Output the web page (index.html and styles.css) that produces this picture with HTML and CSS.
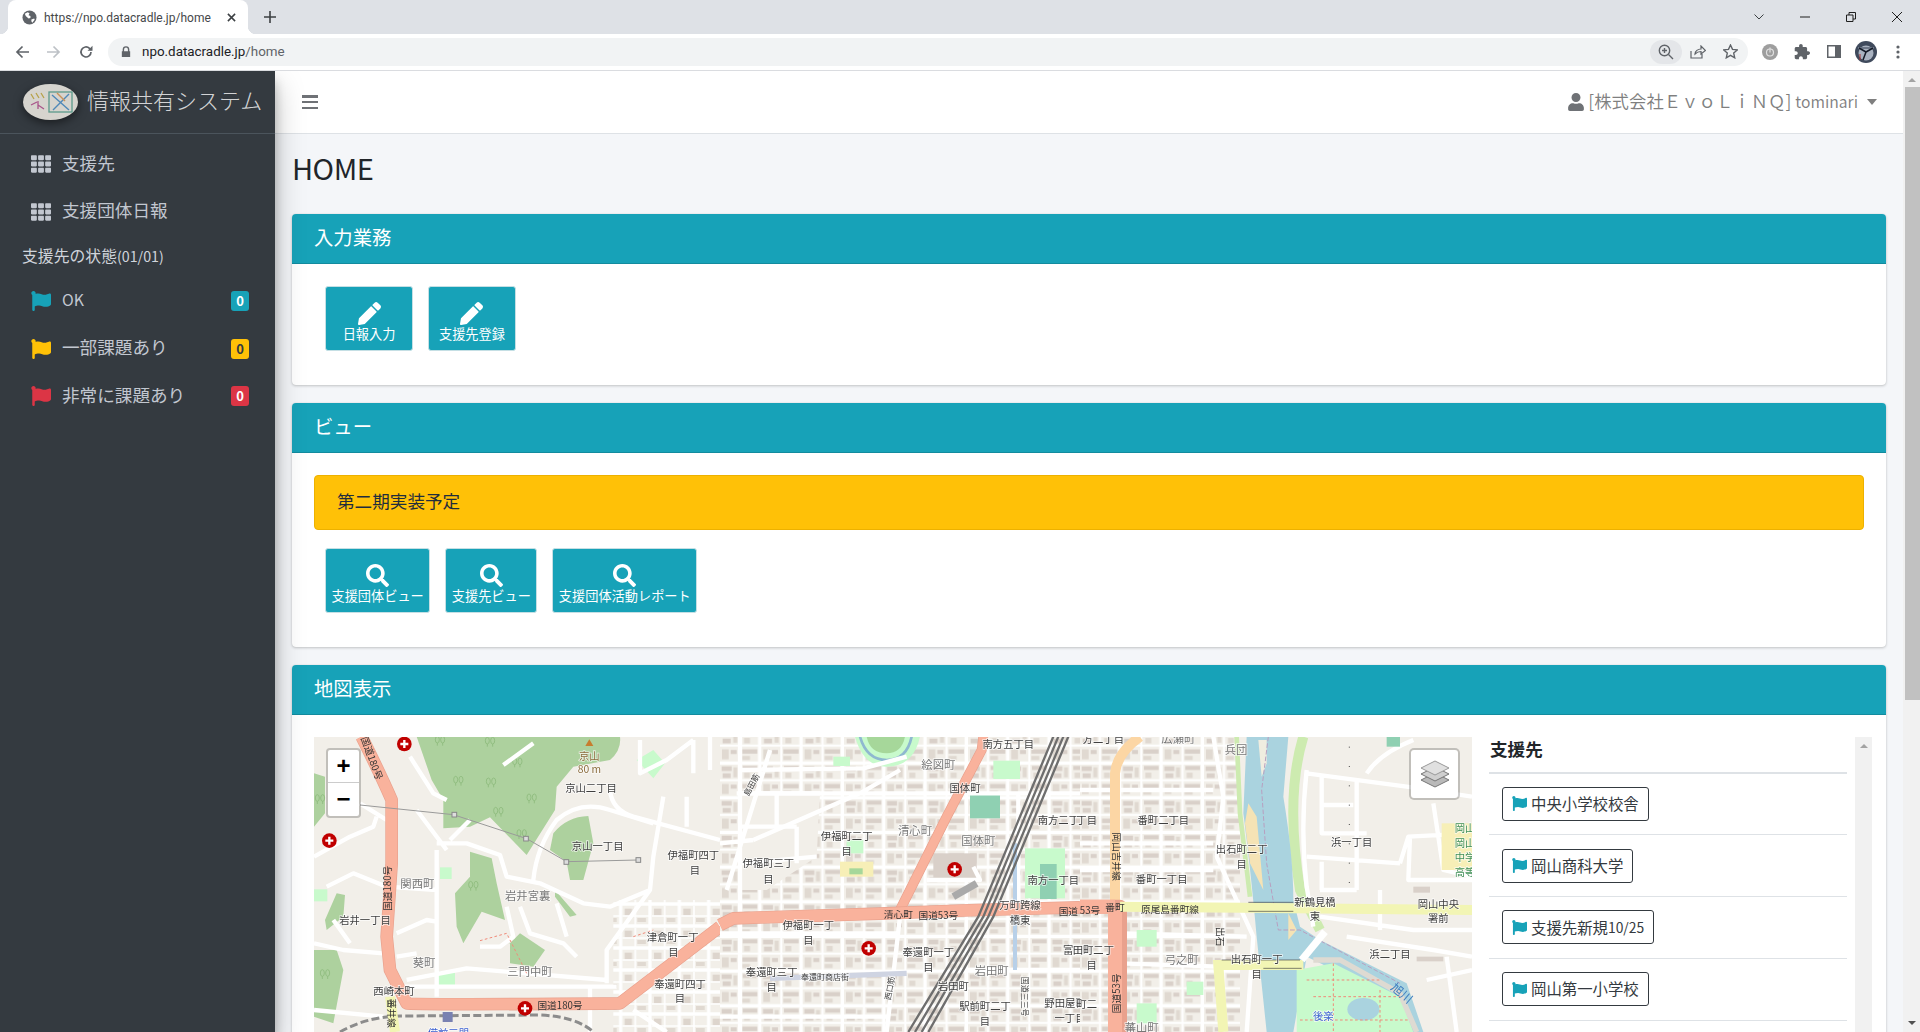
FILE: index.html
```html
<!DOCTYPE html>
<html lang="ja">
<head>
    <meta charset="UTF-8">
    <meta name="viewport" content="width=device-width, initial-scale=1.0">
    <title>HOME</title>
    <link rel="stylesheet" href="styles.css">
</head>
<body>

    <svg class="icon-defs" aria-hidden="true">
        <symbol id="i-flag" viewBox="0 0 512 512"><path d="M349.565 98.783C295.978 98.783 251.721 64 184.348 64c-24.955 0-47.309 4.384-68.045 12.013a55.947 55.947 0 0 0 3.586-23.562C118.117 24.015 94.806 1.206 66.338.048 34.345-1.254 8 24.296 8 56c0 19.026 9.497 35.825 24 45.945V488c0 13.255 10.745 24 24 24h16c13.255 0 24-10.745 24-24v-94.4c28.311-12.064 63.582-22.122 114.435-22.122 53.588 0 97.844 34.783 165.217 34.783 48.169 0 86.667-16.294 122.505-40.858C506.84 359.452 512 349.571 512 339.045v-243.1c0-23.393-24.269-38.87-45.485-29.016-34.338 15.948-76.454 31.854-116.95 31.854z"/></symbol>
        <symbol id="i-th" viewBox="0 0 512 512"><path d="M149.333 56v80c0 13.255-10.745 24-24 24H24c-13.255 0-24-10.745-24-24V56c0-13.255 10.745-24 24-24h101.333c13.255 0 24 10.745 24 24zm181.334 240v-80c0-13.255-10.745-24-24-24H205.333c-13.255 0-24 10.745-24 24v80c0 13.255 10.745 24 24 24h101.333c13.256 0 24.001-10.745 24.001-24zm32-240v80c0 13.255 10.745 24 24 24H488c13.255 0 24-10.745 24-24V56c0-13.255-10.745-24-24-24H386.667c-13.255 0-24 10.745-24 24zm-32 80V56c0-13.255-10.745-24-24-24H205.333c-13.255 0-24 10.745-24 24v80c0 13.255 10.745 24 24 24h101.333c13.256 0 24.001-10.745 24.001-24zm-205.334 56H24c-13.255 0-24 10.745-24 24v80c0 13.255 10.745 24 24 24h101.333c13.255 0 24-10.745 24-24v-80c0-13.255-10.745-24-24-24zM0 376v80c0 13.255 10.745 24 24 24h101.333c13.255 0 24-10.745 24-24v-80c0-13.255-10.745-24-24-24H24c-13.255 0-24 10.745-24 24zm386.667-56H488c13.255 0 24-10.745 24-24v-80c0-13.255-10.745-24-24-24H386.667c-13.255 0-24 10.745-24 24v80c0 13.255 10.745 24 24 24zm0 160H488c13.255 0 24-10.745 24-24v-80c0-13.255-10.745-24-24-24H386.667c-13.255 0-24 10.745-24 24v80c0 13.255 10.745 24 24 24zM181.333 376v80c0 13.255 10.745 24 24 24h101.333c13.255 0 24-10.745 24-24v-80c0-13.255-10.745-24-24-24H205.333c-13.255 0-24 10.745-24 24z"/></symbol>
        <symbol id="i-pencil" viewBox="0 0 512 512"><path d="M497.9 142.1l-46.1 46.1c-4.7 4.7-12.3 4.7-17 0l-111-111c-4.7-4.7-4.7-12.3 0-17l46.1-46.1c18.7-18.7 49.1-18.7 67.9 0l60.1 60.1c18.8 18.7 18.8 49.1 0 67.9zM284.2 99.8L21.6 362.4.4 483.9c-2.9 16.4 11.4 30.6 27.8 27.8l121.5-21.3 262.6-262.6c4.7-4.7 4.7-12.3 0-17l-111-111c-4.8-4.7-12.4-4.7-17.1 0z"/></symbol>
        <symbol id="i-search" viewBox="0 0 512 512"><path d="M505 442.7L405.3 343c-4.5-4.5-10.6-7-17-7H372c27.6-35.3 44-79.7 44-128C416 93.1 322.9 0 208 0S0 93.1 0 208s93.1 208 208 208c48.3 0 92.7-16.4 128-44v16.3c0 6.4 2.5 12.5 7 17l99.7 99.7c9.4 9.4 24.6 9.4 33.9 0l28.3-28.3c9.4-9.4 9.4-24.6.1-34zM208 336c-70.7 0-128-57.2-128-128 0-70.7 57.2-128 128-128 70.7 0 128 57.2 128 128 0 70.7-57.2 128-128 128z"/></symbol>
        <symbol id="i-user" viewBox="0 0 448 512"><path d="M224 256c70.7 0 128-57.3 128-128S294.7 0 224 0 96 57.3 96 128s57.3 128 128 128zm89.6 32h-16.7c-22.2 10.2-46.9 16-72.9 16s-50.6-5.8-72.9-16h-16.7C60.2 288 0 348.2 0 422.4V464c0 26.5 21.5 48 48 48h352c26.5 0 48-21.5 48-48v-41.6c0-74.2-60.2-134.4-134.4-134.4z"/></symbol>
    </svg>

    <!-- browser window -->
    <div class="tab-strip">
        <div class="tab">
            <svg class="tab-favicon" viewBox="0 0 16 16"><circle cx="8" cy="8" r="7.5" fill="#5f6368"/><path d="M3 4l3-1.5 2 1-1 2 2 1v2l-2 .5-3-2.5zM10 10l3-1 .5 1.5-2.5 3-1-1.5z" fill="#fff"/></svg>
            <span class="tab-title">https://npo.datacradle.jp/home</span>
            <svg class="tab-close" viewBox="0 0 10 10"><path d="M1 1l8 8M9 1l-8 8" stroke="#3c4043" stroke-width="1.7"/></svg>
        </div>
        <svg class="tab-new" viewBox="0 0 12 12"><path d="M6 0v12M0 6h12" stroke="#3c4043" stroke-width="1.6"/></svg>
        <div class="window-controls">
            <span class="window-btn"><svg width="10" height="6" viewBox="0 0 10 6"><path d="M.5.5L5 5 9.500.5" fill="none" stroke="#3c4043"/></svg></span>
            <span class="window-btn"><svg width="10" height="2" viewBox="0 0 10 2"><path d="M0 1h10" stroke="#1f1f1f"/></svg></span>
            <span class="window-btn"><svg width="10" height="10" viewBox="0 0 10 10"><path d="M.5 3h6.500v6.500H.5zM3 3V.5h6.500V7H7" fill="none" stroke="#1f1f1f"/></svg></span>
            <span class="window-btn"><svg width="10" height="10" viewBox="0 0 10 10"><path d="M0 0l10 10M10 0L0 10" stroke="#1f1f1f"/></svg></span>
        </div>
    </div>
    <div class="toolbar">
        <span class="tool-btn"><svg width="14" height="14" viewBox="0 0 14 14"><path d="M14 7H2M7.500 1.500L2 7l5.500 5.500" fill="none" stroke="#5f6368" stroke-width="1.700"/></svg></span>
        <span class="tool-btn"><svg width="14" height="14" viewBox="0 0 14 14"><path d="M0 7h12M6.500 1.500L12 7l-5.500 5.500" fill="none" stroke="#bdc1c6" stroke-width="1.700"/></svg></span>
        <span class="tool-btn"><svg width="14" height="14" viewBox="0 0 14 14"><path d="M12 7a5 5 0 1 1-1.500-3.600L12.500 5" fill="none" stroke="#5f6368" stroke-width="1.700"/><path d="M13.500.8v5h-5z" fill="#5f6368"/></svg></span>
        <div class="omnibox">
            <svg class="omni-lock" viewBox="0 0 12 14"><path d="M2 6V4a4 4 0 0 1 8 0v2h1v7H1V6zm1.700 0h4.600V4a2.300 2.300 0 0 0-4.600 0z" fill="#5f6368"/></svg>
            <span class="omni-url">npo.datacradle.jp<span class="omni-path">/home</span></span>
            <span class="omni-pill"><svg width="16" height="16" viewBox="0 0 16 16"><circle cx="6.500" cy="6.500" r="5.200" fill="none" stroke="#5f6368" stroke-width="1.400"/><path d="M10.500 10.500L15 15M4 6.500h5M6.500 4v5" stroke="#5f6368" stroke-width="1.400"/></svg></span>
            <span class="omni-btn"><svg width="16" height="14" viewBox="0 0 16 14"><path d="M1 6v7h11V9M5 9c0-3 3-5 6-5V1l4.500 4.500L11 9V6.500C8.500 6.500 6.500 7.500 5 9z" fill="none" stroke="#5f6368" stroke-width="1.200"/></svg></span>
            <span class="omni-btn"><svg width="15" height="15" viewBox="0 0 15 15"><path d="M7.500 1l2 4.400 4.800.5-3.600 3.200 1 4.700-4.200-2.400-4.200 2.400 1-4.700L.7 5.900l4.800-.5z" fill="none" stroke="#5f6368" stroke-width="1.400"/></svg></span>
        </div>
        <span class="tool-btn"><svg width="16" height="16" viewBox="0 0 16 16"><circle cx="8" cy="8" r="8" fill="#9e9e9e"/><circle cx="8" cy="8.500" r="3.500" fill="none" stroke="#e0e0e0" stroke-width="1.200"/><path d="M8 3.500v5" stroke="#e0e0e0" stroke-width="1.200"/></svg></span>
        <span class="tool-btn"><svg width="16" height="16" viewBox="1 1 22 22"><path fill="#5f6368" d="M20.500 11H19V7c0-1.100-.9-2-2-2h-4V3.500C13 2.120 11.880 1 10.500 1S8 2.120 8 3.500V5H4c-1.100 0-1.990.9-1.990 2v3.800H3.500c1.490 0 2.700 1.210 2.700 2.700s-1.210 2.700-2.700 2.700H2V20c0 1.100.9 2 2 2h3.800v-1.500c0-1.490 1.210-2.700 2.700-2.700 1.490 0 2.700 1.210 2.700 2.700V22H17c1.100 0 2-.9 2-2v-4h1.500c1.380 0 2.500-1.120 2.500-2.500S21.880 11 20.500 11z"/></svg></span>
        <span class="tool-btn"><svg width="14" height="13" viewBox="0 0 14 13"><rect width="14" height="13" fill="#5f6368"/><rect x="1.500" y="1.500" width="6.500" height="10" fill="#fff"/></svg></span>
        <span class="tool-btn"><svg width="22" height="22" viewBox="0 0 22 22"><circle cx="11" cy="11" r="11" fill="#3f4a5c"/><circle cx="11" cy="12" r="7.500" fill="#a9b2c0"/><path d="M3 6h16v2H3z" fill="#6d7788"/><path d="M11 11L4 7M11 11l7-4M11 11L8 19" stroke="#141a26" stroke-width="1.500" fill="none"/><path d="M5 13v6" stroke="#a33" stroke-width="1"/></svg></span>
        <span class="tool-btn"><svg width="4" height="14" viewBox="0 0 4 14"><circle cx="2" cy="2" r="1.600" fill="#5f6368"/><circle cx="2" cy="7" r="1.600" fill="#5f6368"/><circle cx="2" cy="12" r="1.600" fill="#5f6368"/></svg></span>
    </div>

    <div class="app">
        <!-- sidebar -->
        <aside class="sidebar">
            <div class="brand">
                <svg class="brand-logo" viewBox="0 0 55 36">
                    <ellipse cx="27.500" cy="18" rx="27.500" ry="18" fill="#d6d4ce"/>
                    <rect x="26" y="8" width="23" height="20" fill="none" stroke="#5b9a8b" stroke-width="1.300"/>
                    <path d="M29 11l17 15M46 10L30 26" stroke="#4f88b8" stroke-width="1.400"/>
                    <path d="M34 9l8 8" stroke="#c9925a" stroke-width="1.400"/>
                    <path d="M8 10l3 5M13 9l3 5M18 9l3 5" stroke="#b7a24a" stroke-width="1.300"/>
                    <path d="M8 21l6-3M15 17v8M15 21l6 4" stroke="#a9558a" stroke-width="1.300"/>
                </svg>
                <span class="brand-text">情報共有システム</span>
            </div>
            <nav class="side-nav">
                <a class="nav-item"><svg class="nav-icon icon-grid"><use href="#i-th"/></svg>支援先</a>
                <a class="nav-item"><svg class="nav-icon icon-grid"><use href="#i-th"/></svg>支援団体日報</a>
                <div class="nav-header">支援先の状態<span class="latin">(01/01)</span></div>
                <a class="nav-item"><svg class="nav-icon flag-info"><use href="#i-flag"/></svg><span class="latin">OK</span><span class="badge badge-info">0</span></a>
                <a class="nav-item"><svg class="nav-icon flag-warning"><use href="#i-flag"/></svg>一部課題あり<span class="badge badge-warning">0</span></a>
                <a class="nav-item"><svg class="nav-icon flag-danger"><use href="#i-flag"/></svg>非常に課題あり<span class="badge badge-danger">0</span></a>
            </nav>
        </aside>

        <div class="main">
            <header class="topbar">
                <span class="menu-toggle"><i></i><i></i><i></i></span>
                <span class="user-menu">
                    <svg class="user-icon"><use href="#i-user"/></svg>
                    <span class="user-name">[株式会社ＥｖｏＬｉＮＱ] <span class="latin">tominari</span></span>
                    <i class="caret"></i>
                </span>
            </header>

            <div class="content">
                <h1 class="page-title">HOME</h1>

                <section class="card">
                    <h3 class="card-header">入力業務</h3>
                    <div class="card-body">
                        <a class="app-btn"><svg class="app-icon"><use href="#i-pencil"/></svg>日報入力</a>
                        <a class="app-btn"><svg class="app-icon"><use href="#i-pencil"/></svg>支援先登録</a>
                    </div>
                </section>

                <section class="card">
                    <h3 class="card-header">ビュー</h3>
                    <div class="card-body">
                        <div class="alert">第二期実装予定</div>
                        <a class="app-btn"><svg class="app-icon"><use href="#i-search"/></svg>支援団体ビュー</a>
                        <a class="app-btn"><svg class="app-icon"><use href="#i-search"/></svg>支援先ビュー</a>
                        <a class="app-btn"><svg class="app-icon"><use href="#i-search"/></svg>支援団体活動レポート</a>
                    </div>
                </section>

                <section class="card">
                    <h3 class="card-header">地図表示</h3>
                    <div class="card-body">
                        <div class="map-row">
                            <div class="map">
                                <svg class="map-tiles" viewBox="314 737 1158 320" preserveAspectRatio="xMinYMin slice">
                                    <defs>
                                        <pattern id="blocks" width="124" height="104" patternUnits="userSpaceOnUse">
                                            <rect width="124" height="104" fill="#f2efe9"/>
                                            <rect x="5" y="5" width="30" height="14" fill="#d9d0c9"/>
                                            <rect x="40" y="8" width="12" height="30" fill="#e0d9d1"/>
                                            <rect x="8" y="26" width="24" height="14" fill="#d9d0c9"/>
                                            <rect x="68" y="4" width="44" height="12" fill="#d9d0c9"/>
                                            <rect x="72" y="24" width="18" height="16" fill="#e0d9d1"/>
                                            <rect x="6" y="58" width="20" height="30" fill="#e0d9d1"/>
                                            <rect x="32" y="60" width="18" height="12" fill="#d9d0c9"/>
                                            <rect x="66" y="58" width="46" height="13" fill="#d9d0c9"/>
                                            <rect x="66" y="78" width="24" height="12" fill="#e0d9d1"/>
                                            <path d="M0 47h124M60 0v104" stroke="#fff" stroke-width="6"/>
                                            <path d="M0 99h124M119 0v104" stroke="#fff" stroke-width="10"/>
                                        </pattern>
                                        <pattern id="blocks-wide" width="88" height="66" patternUnits="userSpaceOnUse">
                                            <rect width="88" height="66" fill="#f2efe9"/>
                                            <rect x="6" y="8" width="22" height="20" fill="#ddd5cd"/>
                                            <rect x="44" y="36" width="26" height="12" fill="#e0d9d1"/>
                                            <path d="M0 60h88M82 0v66" stroke="#fff" stroke-width="10"/>
                                            <path d="M38 0v60M0 30h82" stroke="#fff" stroke-width="5"/>
                                        </pattern>
                                        <g id="hospital">
                                            <circle r="22" fill="#c00000"/>
                                            <path d="M0-12V12M-12 0H12" stroke="#fff" stroke-width="7"/>
                                        </g>
                                        <g id="trees" fill="none" stroke="#8dbb7c" stroke-width="2.500">
                                            <ellipse cx="-8" cy="-6" rx="6" ry="10"/>
                                            <ellipse cx="8" cy="-6" rx="6" ry="10"/>
                                            <path d="M-8 4v8M8 4v8"/>
                                        </g>
                                    </defs>
                                    <rect x="314" y="737" width="1158" height="320" fill="#f2efe9"/>

                                    <!-- west part: hills and route 180 -->
                                    <g transform="translate(300 730) scale(.33333)">
                                        <rect x="940" y="510" width="330" height="420" fill="url(#blocks-wide)"/>
                                        <g class="park">
                                            <path d="M350 20H960Q965 60 930 90L820 110 770 170 765 240 680 375 570 262 510 290 430 295V210L395 150Z"/>
                                            <path d="M510 365L575 385 590 460 615 570 545 545 490 640 470 590 465 490 510 440Z"/>
                                            <path d="M630 640L660 610 735 660 700 710 630 700Z"/>
                                            <path d="M760 310Q800 260 865 258L880 340 850 450H810L800 395 750 360Z"/>
                                            <path d="M42 130L75 140V250L42 290ZM110 490L135 495 130 560 80 600 75 570ZM42 660H110L130 720 100 880 42 860ZM765 480L830 555 810 560 765 500Z"/>
                                        </g>
                                        <use href="#trees" x="475" y="155"/>
                                        <use href="#trees" x="573" y="160"/>
                                        <use href="#trees" x="695" y="208"/>
                                        <use href="#trees" x="652" y="100"/>
                                        <use href="#trees" x="595" y="248"/>
                                        <use href="#trees" x="420" y="35"/>
                                        <use href="#trees" x="570" y="38"/>
                                        <use href="#trees" x="665" y="315"/>
                                        <use href="#trees" x="520" y="470"/>
                                        <use href="#trees" x="60" y="210"/>
                                        <use href="#trees" x="75" y="735"/>
                                        <g class="park-light">
                                            <rect x="420" y="412" width="35" height="35"/>
                                            <path d="M1010 90L1060 60 1095 100 1060 145Z"/>
                                            <rect x="415" y="725" width="50" height="40"/>
                                            <rect x="42" y="478" width="40" height="36"/>
                                        </g>
                                        <path d="M930 180Q935 240 1000 260L1260 330M700 450Q710 350 770 270 840 210 930 240L1060 280M1090 200L1060 380 1050 480 920 660V760M410 340H500L600 375 620 440 720 460 850 520 930 530 1050 480M410 360V800M350 240L440 360M330 80L400 190 440 210M610 105L700 40M290 610L380 570 410 575M290 680L350 670M320 750L500 715 920 750M42 380L150 320 220 290 230 260M80 470L160 430 260 470 410 480M42 640L130 660 250 670M620 530L640 620 600 650 540 650M660 530L690 610 790 640 830 680M770 520L800 620M290 770H950M180 220L260 270M450 330L510 270M100 570L150 640M1020 30V130L1100 90 1180 30M1180 30V130M42 840L250 860M1160 200V290M1230 20V120M870 770V906M1000 840L1100 906" class="road"/>
                                        <path d="M185 20Q240 130 275 210V400L260 620 270 720 320 820Q340 825 960 820L1260 590" class="trunk-casing"/>
                                        <path d="M185 20Q240 130 275 210V400L260 620 270 720 320 820Q340 825 960 820L1260 590" class="trunk"/>
                                        <path d="M180 225L460 254 680 326 800 395 1015 390" class="power-line"/>
                                        <g class="pylon"><rect x="456" y="247" width="14" height="14"/><rect x="671" y="319" width="14" height="14"/><rect x="792" y="389" width="14" height="14"/><rect x="1008" y="383" width="14" height="14"/></g>
                                        <path d="M120 906Q200 860 300 858L720 855Q830 860 880 906" class="rail"/>
                                        <path d="M270 800L285 906" class="road-yellow"/>
                                        <rect x="428" y="846" width="30" height="30" fill="#7981b1"/>
                                        <path d="M868 28L880 48H856Z" fill="#c77d2e"/>
                                        <path d="M1000 620L1060 600M540 632L620 610 680 730" class="path-red"/>

                                        <text class="map-label label-peak" x="868" y="90">京山</text>
                                        <text class="map-label label-peak" x="868" y="130">80 m</text>
                                        <text class="map-label" x="873" y="186">京山二丁目</text>
                                        <text class="map-label" x="893" y="361">京山一丁目</text>
                                        <text class="map-label" x="1180" y="386">伊福町四丁</text>
                                        <text class="map-label" x="1185" y="431">目</text>
                                        <text class="map-label label-area" x="352" y="474">関西町</text>
                                        <text class="map-label label-area" x="683" y="511">岩井宮裏</text>
                                        <text class="map-label" x="195" y="583">岩井一丁目</text>
                                        <text class="map-label label-area" x="372" y="710">葵町</text>
                                        <text class="map-label label-area" x="690" y="738">三門中町</text>
                                        <text class="map-label" x="282" y="796">西崎本町</text>
                                        <text class="map-label label-road" x="780" y="836">国道180号</text>
                                        <text class="map-label" x="1118" y="633">津倉町一丁</text>
                                        <text class="map-label" x="1120" y="677">目</text>
                                        <text class="map-label" x="1140" y="773">奉還町四丁</text>
                                        <text class="map-label" x="1140" y="817">目</text>
                                        <text class="map-label label-road" transform="rotate(-90 262 475)" x="262" y="485">国道180号</text>
                                        <text class="map-label label-road" transform="rotate(70 215 85)" x="215" y="95">国道180号</text>
                                        <text class="map-label label-road" transform="rotate(90 275 850)" x="275" y="860">蕃井線</text>
                                        <text class="map-label label-blue" x="445" y="920">備前三門</text>
                                        <use href="#hospital" x="313" y="42"/>
                                        <use href="#hospital" x="88" y="332"/>
                                        <use href="#hospital" x="675" y="835"/>
                                    </g>

                                    <!-- centre part: station district -->
                                    <g transform="translate(720 730) scale(.33333)">
                                        <rect x="0" y="20" width="1080" height="900" fill="url(#blocks)"/>
                                        <path d="M60 190H300L290 380 140 480 60 480Z" fill="#f2efe9"/>
                                        <path d="M60 190H300M60 290H230M60 400L290 380M170 190V300M230 290V400" class="road"/>
                                        <path d="M405 20Q430 110 500 110 580 110 600 20Z" fill="#c8facc"/>
                                        <path d="M420 20Q440 90 500 90 560 90 575 20" fill="none" stroke="#8fb8d0" stroke-width="8"/>
                                        <path d="M440 20Q450 70 500 70 545 70 555 20Z" fill="#a6d79a"/>
                                        <g class="park-light">
                                            <rect x="820" y="92" width="80" height="55"/>
                                            <rect x="340" y="80" width="50" height="28"/>
                                            <rect x="380" y="330" width="50" height="40"/>
                                            <rect x="915" y="355" width="120" height="150"/>
                                        </g>
                                        <rect x="750" y="190" width="90" height="75" fill="#8fd0b2"/>
                                        <rect x="960" y="402" width="50" height="105" fill="#8fd0b2"/>
                                        <rect x="640" y="370" width="130" height="80" fill="#d9d0c9"/>
                                        <rect x="360" y="395" width="100" height="45" fill="#f7efb7"/>
                                        <rect x="388" y="415" width="40" height="18" fill="#a6d79a"/>
                                        <path d="M60 20V906M20 480L150 60M50 190H1080M60 120L430 115 560 80M0 340L100 330M100 330L420 190 540 120M0 610H540M0 860H500M500 906L540 560M620 450H780L760 410M720 720H1080M895 190V520" class="road"/>
                                        <path d="M885 340V720" stroke="#b8d0e8" stroke-width="12"/>
                                        <path d="M150 745L560 730" stroke="#cfd4e2" stroke-width="16"/>
                                        <path d="M540 540L680 260 785 60 790 20" class="trunk-casing trunk-thin"/>
                                        <path d="M540 540L680 260 785 60 790 20" class="trunk trunk-thin"/>
                                        <path d="M0 585L40 565 500 550 770 540 1080 532" class="trunk-casing"/>
                                        <path d="M0 585L40 565 500 550 770 540 1080 532" class="trunk"/>
                                        <path d="M565 906L775 560 1000 20M585 906L790 560 1015 20M605 906L805 560 1030 20M625 906L820 560 1045 20" class="rail-bundle"/>
                                        <path d="M700 500L770 460" stroke="#aaa" stroke-width="22"/>

                                        <text class="map-label" x="865" y="53">南方五丁目</text>
                                        <text class="map-label label-area" x="655" y="117">絵図町</text>
                                        <text class="map-label" x="735" y="186">国体町</text>
                                        <text class="map-label" x="1015" y="281">南方二丁</text>
                                        <text class="map-label label-area" x="585" y="315">清心町</text>
                                        <text class="map-label label-area" x="775" y="345">国体町</text>
                                        <text class="map-label" x="380" y="331">伊福町二丁</text>
                                        <text class="map-label" x="380" y="376">目</text>
                                        <text class="map-label" x="145" y="411">伊福町三丁</text>
                                        <text class="map-label" x="145" y="458">目</text>
                                        <text class="map-label" x="1000" y="461">南方一丁目</text>
                                        <text class="map-label" x="900" y="536">万町跨線</text>
                                        <text class="map-label" x="900" y="581">橋東</text>
                                        <text class="map-label label-road" x="535" y="563">清心町</text>
                                        <text class="map-label label-road" x="655" y="568">国道53号</text>
                                        <text class="map-label label-road" x="1045" y="554">国道</text>
                                        <text class="map-label" x="265" y="598">伊福町一丁</text>
                                        <text class="map-label" x="265" y="643">目</text>
                                        <text class="map-label" x="625" y="679">奉還町一丁</text>
                                        <text class="map-label" x="625" y="723">目</text>
                                        <text class="map-label" x="1060" y="671">富田</text>
                                        <text class="map-label label-area" x="815" y="735">岩田町</text>
                                        <text class="map-label" x="700" y="780">岩田町</text>
                                        <text class="map-label" x="155" y="739">奉還町三丁</text>
                                        <text class="map-label" x="155" y="784">目</text>
                                        <text class="map-label label-small" x="315" y="750">奉還町商店街</text>
                                        <text class="map-label label-small" transform="rotate(-80 510 775)" x="510" y="783">西口筋</text>
                                        <text class="map-label label-small" transform="rotate(-62 95 165)" x="95" y="173">島田筋</text>
                                        <text class="map-label label-small" transform="rotate(90 915 800)" x="915" y="808">国道三三号</text>
                                        <text class="map-label" x="795" y="841">駅前町二丁</text>
                                        <text class="map-label" x="795" y="886">目</text>
                                        <text class="map-label" x="1035" y="831">野田屋町</text>
                                        <text class="map-label" x="1050" y="876">一丁目</text>
                                        <use href="#hospital" x="704" y="418"/>
                                        <use href="#hospital" x="446" y="655"/>
                                    </g>

                                    <!-- east part: river -->
                                    <g transform="translate(1080 730) scale(.33333)">
                                        <rect x="0" y="20" width="480" height="900" fill="url(#blocks)"/>
                                        <rect x="680" y="20" width="500" height="900" fill="#f2efe9"/>
                                        <rect x="1000" y="470" width="50" height="18" fill="#d9d0c9"/>
                                        <rect x="1010" y="680" width="80" height="14" fill="#d9d0c9"/>
                                        <path d="M470 20L480 250 510 500" stroke="#cdebb0" stroke-width="14" fill="none"/>
                                        <path d="M670 20Q615 200 660 480L720 600" stroke="#cdebb0" stroke-width="30" fill="none"/>
                                        <path d="M500 20H625L610 200Q640 380 640 510L660 590 720 630 980 760 1030 906H980Q900 780 680 680L640 906H560L530 620Q510 400 490 250Z" fill="#aad3df"/>
                                        <path d="M505 220L530 260 550 480 510 400 495 280ZM625 550L650 600 625 630Z" fill="#f5e3b5"/>
                                        <path d="M535 30H560V100L545 140Z" fill="#f0ede0"/>
                                        <path d="M565 20L545 180 560 400 595 600H660L960 760" fill="none" stroke="#b89fc0" stroke-width="3" stroke-dasharray="14 6"/>
                                        <path d="M650 720L760 700 960 800 1000 906H650Z" fill="#c8facc"/>
                                        <path d="M700 690L780 690 960 790 1010 906" fill="none" stroke="#dedad2" stroke-width="16"/>
                                        <ellipse cx="850" cy="838" rx="48" ry="34" fill="#aad3df"/>
                                        <path d="M680 750H900M700 800H960M660 870H990M760 700V906M900 780V906" class="path-red"/>
                                        <path d="M680 120Q660 300 680 470L700 590M680 130L980 170 1176 200M725 140V310H860M680 380L960 400M720 480H830M960 400L985 320 1176 310M830 150V480M1000 30Q900 70 860 130M1060 220L1090 420 1176 440M800 620L1060 660 1176 680M720 560L1000 600H1176M400 20L430 200 410 380 520 620 500 906M0 180H400M0 340H400M0 420H400M130 610L500 620M120 700L420 710M725 225H820M725 395V480M900 480V600M990 320L985 450H1176M1100 680L1130 906M1040 750L1176 720" class="road"/>
                                        <path d="M808 50V480" stroke="#444" stroke-width="3" stroke-dasharray="3 55"/>
                                        <rect x="1085" y="280" width="95" height="140" fill="#f7efb7"/>
                                        <rect x="170" y="600" width="60" height="50" fill="#c8facc"/>
                                        <rect x="170" y="820" width="60" height="60" fill="#c8facc"/>
                                        <rect x="320" y="755" width="50" height="40" fill="#c8facc"/>
                                        <rect x="920" y="20" width="40" height="30" fill="#8fd0b2"/>
                                        <path d="M180 20Q110 70 105 130V510" class="road-orange"/>
                                        <path d="M0 530H120V906" class="trunk-casing trunk-wide"/>
                                        <path d="M0 530H105M105 530V906" class="trunk trunk-wide"/>
                                        <path d="M120 530L1176 540" class="road-yellow"/>
                                        <path d="M430 906L415 705H670" class="road-yellow"/>
                                        <path d="M505 517H640M505 544H640M550 715H665M425 690L660 690" stroke="#444" stroke-width="2" fill="none"/>
                                        <path d="M665 690L735 605" stroke="#fff" stroke-width="22"/>

                                        <text class="map-label" x="70" y="39">方二丁目</text>
                                        <text class="map-label label-area" x="295" y="39">広瀬町</text>
                                        <text class="map-label label-area" x="468" y="72">兵団</text>
                                        <text class="map-label" x="20" y="281">丁目</text>
                                        <text class="map-label" x="250" y="283">番町二丁目</text>
                                        <text class="map-label" x="815" y="348">浜一丁目</text>
                                        <text class="map-label" x="485" y="368">出石町二丁</text>
                                        <text class="map-label" x="485" y="413">目</text>
                                        <text class="map-label" x="245" y="458">番町一丁目</text>
                                        <text class="map-label label-green" x="1155" y="306">岡山</text>
                                        <text class="map-label label-green" x="1155" y="351">岡山</text>
                                        <text class="map-label label-green" x="1155" y="393">中学</text>
                                        <text class="map-label label-green" x="1155" y="439">高等</text>
                                        <text class="map-label" x="1075" y="533">岡山中央</text>
                                        <text class="map-label" x="1075" y="577">署前</text>
                                        <text class="map-label" x="705" y="527">新鶴見橋</text>
                                        <text class="map-label" x="705" y="571">東</text>
                                        <text class="map-label label-road" x="30" y="551">53号</text>
                                        <text class="map-label label-road" x="105" y="544">番町</text>
                                        <text class="map-label label-road" x="270" y="549">原尾島番町線</text>
                                        <text class="map-label" x="530" y="699">出石町一丁</text>
                                        <text class="map-label" x="530" y="743">目</text>
                                        <text class="map-label label-area" x="305" y="703">弓之町</text>
                                        <text class="map-label" x="930" y="683">浜二丁目</text>
                                        <text class="map-label" x="40" y="671">田町二丁</text>
                                        <text class="map-label" x="35" y="716">目</text>
                                        <text class="map-label" x="20" y="833">町二</text>
                                        <text class="map-label label-area" x="185" y="905">蕃山町</text>
                                        <text class="map-label label-road" transform="rotate(-90 110 790)" x="110" y="800">国道53号</text>
                                        <text class="map-label label-road" transform="rotate(90 110 380)" x="110" y="390">岡山吉井線</text>
                                        <text class="map-label label-road" transform="rotate(90 420 620)" x="420" y="628">出石</text>
                                        <text class="map-label label-river" transform="rotate(40 965 790)" x="965" y="802">旭川</text>
                                        <text class="map-label label-blue" x="730" y="870">後楽</text>
                                    </g>
                                </svg>
                                <div class="zoom-control"><span>+</span><span>−</span></div>
                                <div class="layers-control">
                                    <svg width="30" height="28" viewBox="0 0 30 28">
                                        <path d="M15 13L1 20l14 7 14-7z" fill="#b9b9b9" stroke="#777"/>
                                        <path d="M15 7L1 14l14 7 14-7z" fill="#cfcfcf" stroke="#777"/>
                                        <path d="M15 1L1 8l14 7 14-7z" fill="#e0e0e0" stroke="#999"/>
                                    </svg>
                                </div>
                            </div>

                            <div class="side-list">
                                <div class="list-inner">
                                    <div class="list-head">支援先</div>
                                    <div class="list-row"><a class="btn-outline"><svg class="btn-flag"><use href="#i-flag"/></svg>中央小学校校舎</a></div>
                                    <div class="list-row"><a class="btn-outline"><svg class="btn-flag"><use href="#i-flag"/></svg>岡山商科大学</a></div>
                                    <div class="list-row"><a class="btn-outline"><svg class="btn-flag"><use href="#i-flag"/></svg>支援先新規<span class="latin">10/25</span></a></div>
                                    <div class="list-row"><a class="btn-outline"><svg class="btn-flag"><use href="#i-flag"/></svg>岡山第一小学校</a></div>
                                </div>
                                <div class="list-scroll"><i class="arrow-up"></i></div>
                            </div>
                        </div>
                    </div>
                </section>
            </div>
        </div>

        <!-- page scrollbar -->
        <div class="page-scroll">
            <i class="arrow-up"></i>
            <div class="page-thumb"></div>
            <i class="arrow-down"></i>
        </div>
    </div>

</body>
</html>
```

FILE: styles.css
```css
* {
    box-sizing: border-box;
}

html, body {
    height: 100%;
}

body {
    margin: 0;
    overflow: hidden;
    font-family: "Noto Sans CJK JP", "Noto Sans", sans-serif;
    font-size: 17.6px;
    line-height: 1.5;
    color: #212529;
    background: #fff;
}

.icon-defs {
    display: none;
}

/* latin letters run narrower in the original than in the CJK font */
.latin {
    font-size: .9em;
}

/* browser window */
.tab-strip {
    display: flex;
    align-items: center;
    height: 34px;
    background: #dee1e6;
}

.tab {
    position: relative;
    display: flex;
    align-items: center;
    width: 240px;
    height: 34px;
    margin-left: 8px;
    padding: 0 10px 0 14px;
    background: #fff;
    border-radius: 8px 8px 0 0;
}

.tab::before,
.tab::after {
    content: "";
    position: absolute;
    bottom: 0;
    width: 8px;
    height: 8px;
}

.tab::before {
    left: -8px;
    background: radial-gradient(circle at 0 0, transparent 8px, #fff 8.5px);
}

.tab::after {
    right: -8px;
    background: radial-gradient(circle at 100% 0, transparent 8px, #fff 8.5px);
}

.tab-favicon {
    width: 15px;
    height: 15px;
    margin-right: 7px;
}

.tab-title {
    flex: 1;
    padding-top: 2px;
    font-family: Roboto, sans-serif;
    font-size: 12px;
    line-height: 34px;
    color: #45474a;
    white-space: nowrap;
}

.tab-close {
    width: 9px;
    height: 9px;
    margin-right: 2px;
}

.tab-new {
    width: 12px;
    height: 12px;
    margin-left: 16px;
}

.window-controls {
    display: flex;
    margin-left: auto;
}

.window-btn {
    display: flex;
    align-items: center;
    justify-content: center;
    width: 46px;
    height: 28px;
}

.toolbar {
    display: flex;
    align-items: center;
    height: 37px;
    padding: 0 6px 1px;
    background: #fff;
    border-bottom: 1px solid #dadce0;
}

.tool-btn {
    display: flex;
    align-items: center;
    justify-content: center;
    flex: none;
    width: 32px;
    height: 28px;
}

.omnibox {
    display: flex;
    align-items: center;
    flex: 1;
    height: 28px;
    margin: 0 6px;
    padding: 0 2px 0 13px;
    background: #f1f3f4;
    border-radius: 14px;
}

.omni-lock {
    width: 10px;
    height: 12px;
    margin-right: 11px;
}

.omni-url {
    flex: 1;
    padding-top: 2px;
    font-family: Roboto, sans-serif;
    font-size: 13.4px;
    color: #202124;
}

.omni-path {
    color: #5f6368;
}

.omni-pill,
.omni-btn {
    display: flex;
    align-items: center;
    justify-content: center;
    width: 32px;
    height: 24px;
}

.omni-pill {
    background: #e4e6e9;
    border-radius: 12px;
}

/* layout */
.app {
    display: flex;
    height: 961px;
    overflow: hidden;
}

.sidebar {
    position: relative;
    z-index: 2;
    flex: none;
    width: 275px;
    background: #343a40;
    box-shadow: 0 14px 28px rgba(0, 0, 0, .25), 0 10px 10px rgba(0, 0, 0, .22);
}

.brand {
    display: flex;
    align-items: center;
    height: 63px;
    padding-left: 23px;
    border-bottom: 1px solid #4b545c;
}

.brand-logo {
    width: 55px;
    height: 36px;
    margin-right: 9px;
    filter: drop-shadow(0 3px 5px rgba(0, 0, 0, .5));
}

.brand-text {
    padding-bottom: 6px;
    font-size: 22px;
    font-weight: 300;
    color: rgba(255, 255, 255, .8);
    white-space: nowrap;
}

.side-nav {
    padding-top: 8px;
}

.nav-item {
    display: flex;
    align-items: center;
    height: 44px;
    margin-bottom: 3.5px;
    padding: 0 26px 2px 31px;
    color: #c2c7d0;
}

.nav-icon {
    flex: none;
    width: 20px;
    height: 20px;
    margin: 2px 11px 0 0;
}

.icon-grid {
    fill: #c2c7d0;
}

.flag-info {
    fill: #17a2b8;
}

.flag-warning {
    fill: #ffc107;
}

.flag-danger {
    fill: #dc3545;
}

.nav-header {
    display: flex;
    align-items: baseline;
    height: 42px;
    padding: 7px 0 0 22px;
    font-size: 15.84px;
    color: #d0d4db;
}

.badge {
    margin: 2px 0 0 auto;
    width: 18px;
    height: 20px;
    font-size: 13px;
    font-weight: 700;
    line-height: 20px;
    text-align: center;
    color: #fff;
    border-radius: 3px;
}

.badge-info {
    background: #17a2b8;
}

.badge-warning {
    background: #ffc107;
    color: #343a40;
}

.badge-danger {
    background: #dc3545;
}

.main {
    flex: 1;
    min-width: 0;
    background: #f4f6f9;
}

.topbar {
    display: flex;
    align-items: center;
    justify-content: space-between;
    height: 63px;
    padding: 0 26px 0 27px;
    background: #fff;
    border-bottom: 1px solid #dee2e6;
}

.menu-toggle {
    display: flex;
    flex-direction: column;
    justify-content: space-between;
    width: 16px;
    height: 14px;
}

.menu-toggle i {
    height: 2.5px;
    background: #6f7276;
}

.user-menu {
    display: flex;
    align-items: center;
    color: rgba(0, 0, 0, .5);
    white-space: nowrap;
}

.user-icon {
    width: 16px;
    height: 18px;
    margin-right: 4px;
    fill: #6f7276;
}

.user-name {
    padding-bottom: 2px;
    font-size: 17.4px;
}

.caret {
    margin-left: 9px;
    border-top: 6px solid #7f7f7f;
    border-left: 5.5px solid transparent;
    border-right: 5.5px solid transparent;
}

.content {
    padding: 0 17px;
}

.page-title {
    margin: 0;
    padding: 14px 0 28px;
    font-size: 29px;
    font-weight: 400;
    letter-spacing: -.5px;
    line-height: 38px;
}

/* cards */
.card {
    margin-bottom: 18px;
    background: #fff;
    border-radius: 4px;
    box-shadow: 0 0 1px rgba(0, 0, 0, .125), 0 1px 3px rgba(0, 0, 0, .2);
}

.card-header {
    margin: 0;
    padding: 11px 22px 14px;
    font-size: 19.36px;
    font-weight: 400;
    line-height: 24px;
    color: #fff;
    background: #17a2b8;
    border-bottom: 1px solid #138b9e;
    border-radius: 4px 4px 0 0;
}

.card-body {
    padding: 22px 22px 23px;
}

.alert {
    margin-bottom: 18px;
    padding: 12.2px 22px 14.2px;
    color: #1f2d3d;
    background: #ffc107;
    border: 1px solid #edb100;
    border-radius: 4px;
}

.app-btn {
    display: inline-block;
    min-width: 88px;
    height: 65px;
    margin: 0 0 11px 11px;
    padding: 15px 5.5px 0;
    font-size: 13.2px;
    line-height: 20px;
    text-align: center;
    color: #fff;
    background: #17a2b8;
    border: 1px solid #c5dfe4;
    border-radius: 3px;
    vertical-align: top;
}

.app-icon {
    display: block;
    width: 23px;
    height: 23px;
    margin: 0 auto -1px;
    fill: #fff;
}

/* map */
.map-row {
    display: flex;
    margin-right: -8px;
}

.map {
    position: relative;
    flex: 1;
    height: 320px;
    overflow: hidden;
}

.map-tiles {
    display: block;
    width: 100%;
    height: 100%;
    filter: blur(.45px);
}

.park {
    fill: #add19e;
}

.park-light {
    fill: #c8facc;
}

.road {
    fill: none;
    stroke: #fff;
    stroke-width: 13;
    stroke-linejoin: round;
}

.trunk,
.trunk-casing {
    fill: none;
    stroke-linejoin: round;
}

.trunk {
    stroke: #f9b29c;
    stroke-width: 34;
}

.trunk-casing {
    stroke: #e9a18d;
    stroke-width: 38;
}

.trunk.trunk-thin {
    stroke-width: 26;
}

.trunk-casing.trunk-thin {
    stroke-width: 30;
}

.trunk.trunk-wide,
.trunk-casing.trunk-wide {
    stroke-width: 42;
}

.road-orange {
    fill: none;
    stroke: #fcd6a4;
    stroke-width: 30;
    stroke-linejoin: round;
}

.road-yellow {
    fill: none;
    stroke: #f2f5b4;
    stroke-width: 30;
    stroke-linejoin: miter;
}

.rail {
    fill: none;
    stroke: #8c8c8c;
    stroke-width: 9;
    stroke-dasharray: 24 10;
}

.rail-bundle {
    fill: none;
    stroke: #6e6e6e;
    stroke-width: 7;
}

.power-line {
    fill: none;
    stroke: #9a9a9a;
    stroke-width: 3;
}

.pylon {
    fill: #ddd;
    stroke: #888;
    stroke-width: 3;
}

.path-red {
    fill: none;
    stroke: #f08a78;
    stroke-width: 3;
    stroke-dasharray: 8 7;
}

.map-label {
    font-size: 31px;
    text-anchor: middle;
    fill: #404040;
    stroke: rgba(255, 255, 255, .7);
    stroke-width: 5;
    paint-order: stroke;
}

.label-area {
    font-size: 34px;
    fill: #777;
}

.label-road {
    font-size: 29px;
    fill: #333;
    stroke: none;
}

.label-small {
    font-size: 24px;
}

.label-peak {
    fill: #8a6a3a;
}

.label-green {
    fill: #3f8f55;
}

.label-blue {
    fill: #3a5fd0;
}

.label-river {
    font-size: 36px;
    fill: #3f7fc0;
    stroke: none;
}

.zoom-control {
    position: absolute;
    top: 11px;
    left: 12px;
    width: 35px;
    background: #fff;
    border: 2px solid rgba(0, 0, 0, .2);
    border-radius: 4px;
    background-clip: padding-box;
}

.zoom-control span {
    display: block;
    height: 33px;
    font-family: "Liberation Sans", sans-serif;
    font-size: 24px;
    font-weight: 700;
    line-height: 32px;
    text-align: center;
    color: #000;
}

.zoom-control span:first-child {
    border-bottom: 1px solid #ccc;
}

.layers-control {
    position: absolute;
    top: 11px;
    right: 12px;
    display: flex;
    align-items: center;
    justify-content: center;
    width: 51px;
    height: 52px;
    background: #fff;
    border: 2px solid rgba(0, 0, 0, .2);
    border-radius: 5px;
    background-clip: padding-box;
}

/* list beside the map */
.side-list {
    display: flex;
    flex: none;
    width: 400px;
    padding-left: 17px;
}

.list-inner {
    flex: 1;
    min-width: 0;
}

.list-head {
    height: 37px;
    padding-left: 1px;
    font-weight: 700;
    line-height: 23px;
    border-bottom: 2px solid #dee2e6;
}

.list-row {
    height: 61.7px;
    padding: 13.2px;
    border-bottom: 1px solid #dee2e6;
}

.btn-outline {
    display: inline-flex;
    align-items: center;
    height: 34px;
    padding: 0 8.8px;
    font-size: 15.4px;
    color: #343a40;
    border: 1px solid #343a40;
    border-radius: 3px;
    white-space: nowrap;
}

.btn-flag {
    width: 15px;
    height: 15px;
    margin-right: 4px;
    fill: #17a2b8;
}

.list-scroll {
    flex: none;
    width: 17px;
    margin-left: 8px;
    padding-top: 7px;
    background: #f1f1f1;
}

.arrow-up,
.arrow-down {
    display: block;
    width: 0;
    margin: 0 auto;
    border-left: 4px solid transparent;
    border-right: 4px solid transparent;
}

.arrow-up {
    border-bottom: 4.5px solid #a3a3a3;
}

.arrow-down {
    border-top: 4.5px solid #505050;
}

.page-scroll {
    display: flex;
    flex-direction: column;
    flex: none;
    width: 17px;
    padding-top: 7px;
    background: #f1f1f1;
}

.page-thumb {
    width: 15px;
    height: 613px;
    margin: 5px 0 auto 2px;
    background: #c1c1c1;
}

.page-scroll .arrow-down {
    margin-bottom: 7px;
}
```
